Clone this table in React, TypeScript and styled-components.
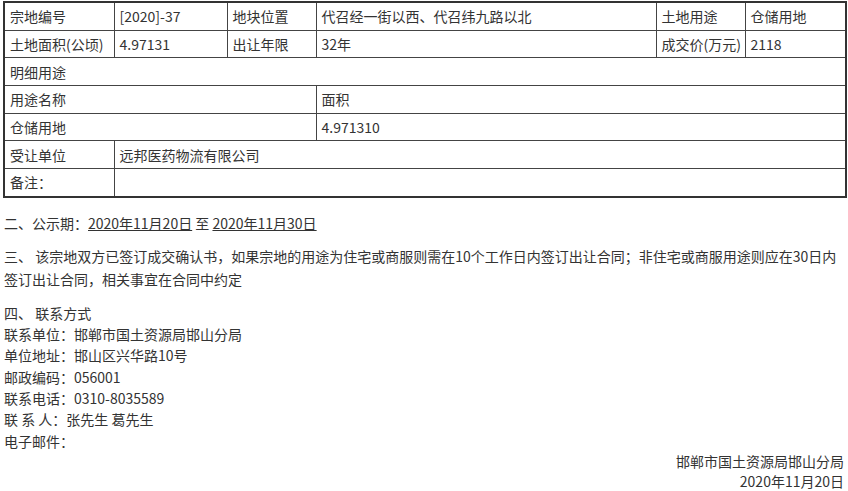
import React from 'react';
import styled, { createGlobalStyle } from 'styled-components';

const GlobalStyle = createGlobalStyle`
  html, body {
    margin: 0;
    padding: 0;
    background: #fff;
  }
  body {
    font-family: "Microsoft YaHei", "Noto Sans CJK SC", "Noto Sans", sans-serif;
    font-size: 14px;
    color: #333;
  }
`;

const Page = styled.div`
  width: 842px;
  padding: 1px 3px 0;
`;

const Table = styled.table`
  width: 842px;
  border-collapse: collapse;
  table-layout: fixed;
  border: 2px solid #333;
`;

const Cell = styled.td`
  height: 26.7px;
  padding: 0 5px;
  border: 1px solid #444;
  line-height: 20px;
  vertical-align: middle;
  white-space: nowrap;
  overflow: hidden;
`;

const Line = styled.p<{ $gap?: number; $lh?: number }>`
  margin: ${({ $gap }) => $gap ?? 0}px 0 0;
  padding-left: 1px;
  line-height: ${({ $lh }) => $lh ?? 21.33}px;
`;

const Dated = styled.span`
  text-decoration: underline;
`;

const Sign = styled.div`
  text-align: right;
  line-height: 19.5px;
  padding-right: 1px;
`;

const cols = [110, 113, 89, 340, 89, 101];

const contacts = [
  '四、 联系方式',
  '联系单位：邯郸市国土资源局邯山分局',
  '单位地址：邯山区兴华路10号',
  '邮政编码：056001',
  '联系电话：0310-8035589',
  '联 系 人：张先生 葛先生',
  '电子邮件：',
];

export default function App() {
  return (
    <Page>
      <GlobalStyle />
      <Table>
        <colgroup>
          {cols.map((w, i) => (
            <col key={i} style={{ width: w }} />
          ))}
        </colgroup>
        <tbody>
          <tr>
            <Cell>宗地编号</Cell>
            <Cell>[2020]-37</Cell>
            <Cell>地块位置</Cell>
            <Cell>代召经一街以西、代召纬九路以北</Cell>
            <Cell>土地用途</Cell>
            <Cell>仓储用地</Cell>
          </tr>
          <tr>
            <Cell>土地面积(公顷)</Cell>
            <Cell>4.97131</Cell>
            <Cell>出让年限</Cell>
            <Cell>32年</Cell>
            <Cell>成交价(万元)</Cell>
            <Cell>2118</Cell>
          </tr>
          <tr>
            <Cell colSpan={6}>明细用途</Cell>
          </tr>
          <tr>
            <Cell colSpan={3}>用途名称</Cell>
            <Cell colSpan={3}>面积</Cell>
          </tr>
          <tr>
            <Cell colSpan={3}>仓储用地</Cell>
            <Cell colSpan={3}>4.971310</Cell>
          </tr>
          <tr>
            <Cell>受让单位</Cell>
            <Cell colSpan={5}>远邦医药物流有限公司</Cell>
          </tr>
          <tr>
            <Cell>备注：</Cell>
            <Cell colSpan={5}></Cell>
          </tr>
        </tbody>
      </Table>
      <Line $gap={15} $lh={21}>
        二、公示期：<Dated>2020年11月20日</Dated> 至 <Dated>2020年11月30日</Dated>
      </Line>
      <Line $gap={11} $lh={23}>
        三、 该宗地双方已签订成交确认书，如果宗地的用途为住宅或商服则需在10个工作日内签订出让合同；非住宅或商服用途则应在30日内签订出让合同，相关事宜在合同中约定
      </Line>
      {contacts.map((t, i) => (
        <Line key={i} $gap={i === 0 ? 12 : 0}>
          {t}
        </Line>
      ))}
      <Sign>
        邯郸市国土资源局邯山分局
        <br />
        2020年11月20日
      </Sign>
    </Page>
  );
}
